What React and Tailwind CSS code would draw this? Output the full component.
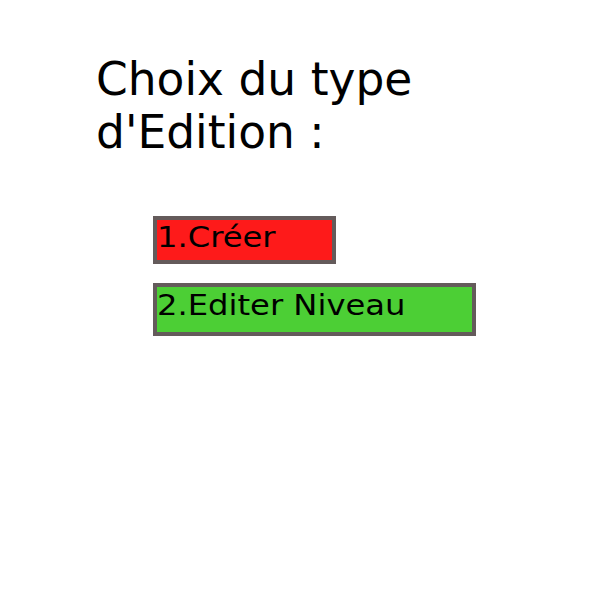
export default function App() {
  return (
    <div className="w-[600px] h-[600px] bg-white text-black font-['DejaVu_Sans',sans-serif]">
      <div className="pt-[53px] pl-[96px]">
        <h1 className="w-[330px] text-[45.5px] leading-[53px] font-normal">Choix du type d'Edition :</h1>
      </div>
      <div className="mt-[57px] pl-[153px] flex flex-col items-start gap-[19px]">
        <button className="w-[183px] h-[48px] border-4 border-[#645b5b] bg-[#fe1a1a] text-left text-[28px] leading-[32px] pl-0 pt-[2px] flex items-start">
          <span className="inline-block origin-left scale-x-[1.15] whitespace-nowrap">1.Créer</span>
        </button>
        <button className="w-[323px] h-[53px] border-4 border-[#645b5b] bg-[#4ccf35] text-left text-[28px] leading-[32px] pl-0 pt-[3px] flex items-start">
          <span className="inline-block origin-left scale-x-[1.15] whitespace-nowrap">2.Editer Niveau</span>
        </button>
      </div>
    </div>
  );
}
